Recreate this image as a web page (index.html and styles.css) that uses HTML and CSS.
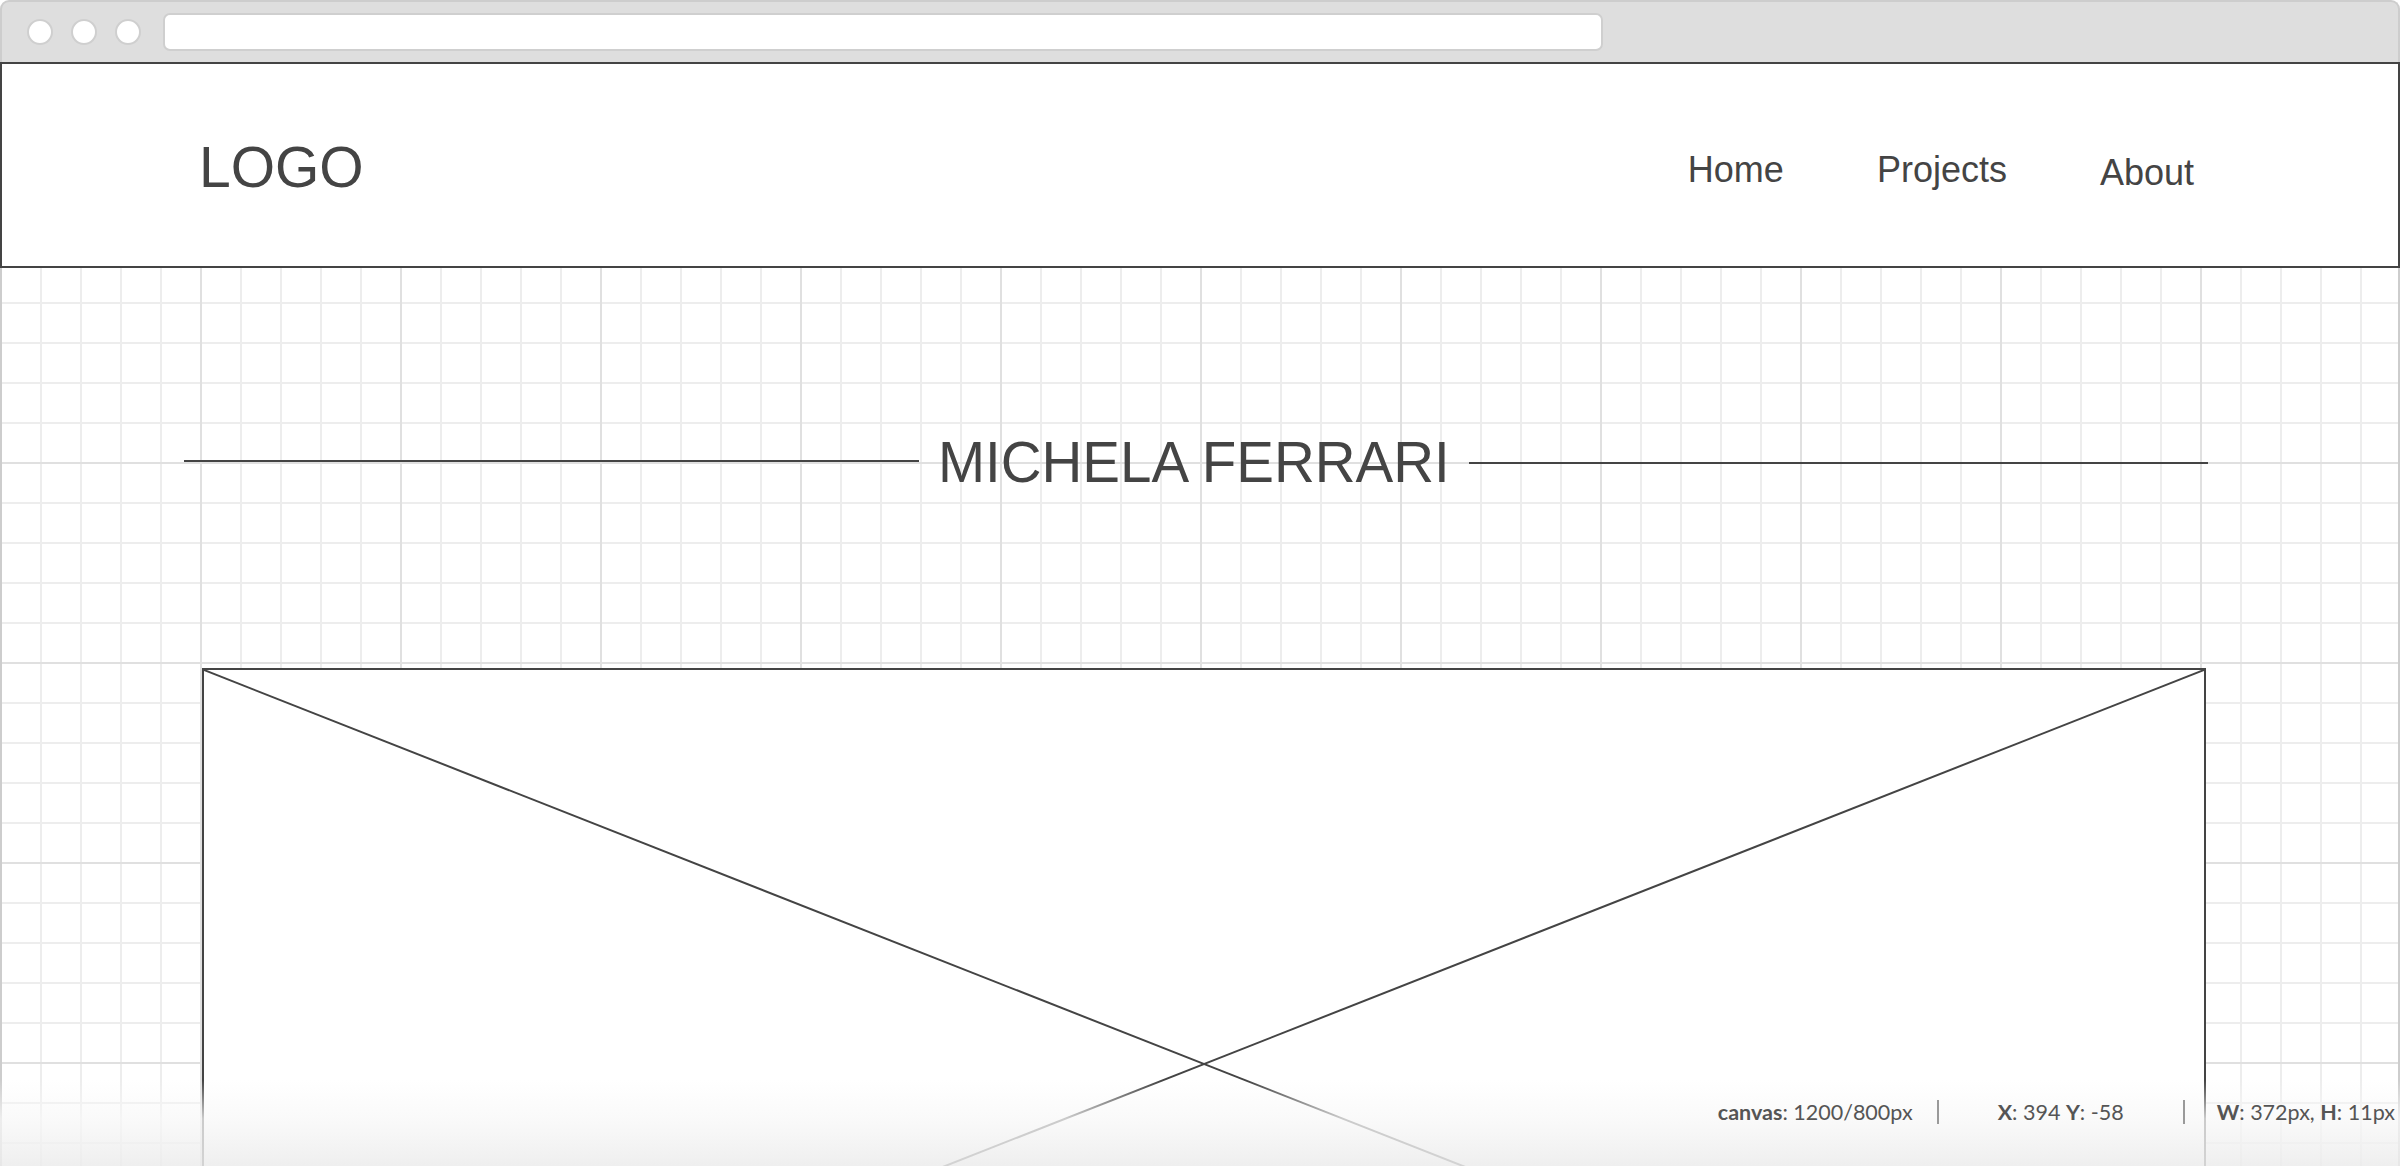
FILE: index.html
```html
<!DOCTYPE html>
<html lang="en">
<head>
<meta charset="utf-8">
<title>Michela Ferrari – wireframe</title>
<link rel="stylesheet" href="styles.css">
</head>
<body>
<div class="window">
  <div class="chrome">
    <span class="dot"></span>
    <span class="dot"></span>
    <span class="dot"></span>
    <div class="address"></div>
  </div>
  <div class="page">
    <header class="topbar">
      <div class="logo">LOGO</div>
      <nav class="nav">
        <a class="nav-item">Home</a>
        <a class="nav-item">Projects</a>
        <a class="nav-item nav-item--low">About</a>
      </nav>
    </header>

    <div class="title-row">
      <span class="rule rule--left"></span>
      <h1 class="title">MICHELA FERRARI</h1>
      <span class="rule rule--right"></span>
    </div>

    <div class="placeholder">
      <svg class="placeholder-x" viewBox="0 0 2000 788" preserveAspectRatio="none">
        <line x1="0" y1="0" x2="2000" y2="788"></line>
        <line x1="2000" y1="0" x2="0" y2="788"></line>
      </svg>
    </div>

    <div class="status">
      <span class="stat stat--canvas"><b>canvas</b>: 1200/800px</span>
      <span class="sep"></span>
      <span class="stat stat--pos"><b>X</b>: 394 <b>Y</b>: -58</span>
      <span class="sep"></span>
      <span class="stat stat--size"><b>W</b>: 372px, <b>H</b>: 11px</span>
    </div>
  </div>
</div>
</body>
</html>
```

FILE: styles.css
```css
* {
  box-sizing: border-box;
}

html, body {
  margin: 0;
  padding: 0;
  width: 2400px;
  height: 1166px;
  overflow: hidden;
  background: #ffffff;
}

.window {
  width: 2400px;
  height: 1166px;
  display: flex;
  flex-direction: column;
}

/* ---------- browser chrome ---------- */
.chrome {
  height: 62px;
  flex: none;
  background: #dedede;
  border: 2px solid #cdcdcd;
  border-bottom: 0;
  border-radius: 9px 9px 0 0;
  display: flex;
  align-items: center;
  padding-left: 25px;
  gap: 18px;
}

.dot {
  width: 26px;
  height: 26px;
  border-radius: 50%;
  background: #ffffff;
  border: 2px solid #cfcfcf;
  flex: none;
}

.address {
  margin-left: 4px;
  width: 1440px;
  height: 38px;
  background: #ffffff;
  border: 2px solid #cfcfcf;
  border-radius: 7px;
}

/* ---------- canvas page ---------- */
.page {
  position: relative;
  flex: 1;
  overflow: hidden;
  background-color: #ffffff;
  background-image:
    linear-gradient(to right, #e0e0e0 2px, transparent 2px),
    linear-gradient(to bottom, #e0e0e0 2px, transparent 2px),
    linear-gradient(to right, #ededed 2px, transparent 2px),
    linear-gradient(to bottom, #ededed 2px, transparent 2px);
  background-size: 200px 200px, 200px 200px, 40px 40px, 40px 40px;
  box-shadow: inset 2px 0 0 #cdcdcd, inset -2px 0 0 #cdcdcd;
  font-family: "Liberation Sans", Arial, sans-serif;
  color: #444444;
}

.topbar {
  height: 206px;
  background: #ffffff;
  border: 2px solid #444444;
  display: flex;
  align-items: flex-start;
  justify-content: space-between;
  padding: 0 204px 0 197px;
}

.logo {
  margin-top: 75px;
  font-size: 57px;
  line-height: 1;
  color: #444444;
}

.nav {
  margin-top: 88px;
  display: flex;
  align-items: flex-start;
  gap: 93px;
}

.nav-item {
  font-size: 36px;
  line-height: 1;
  color: #444444;
  text-decoration: none;
}

.nav-item--low {
  margin-top: 3px;
}

/* ---------- title ---------- */
.title-row {
  margin: 167px 0 0 184px;
  width: 2024px;
  height: 56px;
  display: flex;
  align-items: center;
  gap: 19px;
}

.rule {
  height: 2px;
  background: #444444;
}

.rule--left {
  flex: none;
  width: 735px;
  margin-bottom: 4px;
}

.rule--right {
  flex: 1;
}

.title {
  margin: 0;
  font-size: 56.5px;
  font-weight: normal;
  line-height: 1;
  white-space: nowrap;
  color: #444444;
}

/* ---------- image placeholder ---------- */
.placeholder {
  margin: 177px 0 0 202px;
  width: 2004px;
  height: 792px;
  background: #ffffff;
  border: 2px solid #444444;
}

.placeholder-x {
  display: block;
  width: 100%;
  height: 100%;
}

.placeholder-x line {
  stroke: #444444;
  stroke-width: 2;
  vector-effect: non-scaling-stroke;
}

/* ---------- status overlay ---------- */
.status {
  position: absolute;
  left: 0;
  right: 0;
  bottom: 0;
  height: 86px;
  padding: 20px 5px 0 0;
  display: flex;
  align-items: flex-start;
  justify-content: flex-end;
  background: linear-gradient(to bottom, rgba(250, 250, 250, 0) 0%, rgba(248, 248, 248, 0.75) 45%, rgba(236, 236, 236, 0.85) 100%);
  font-family: Lato, "Open Sans", sans-serif;
  font-size: 21.5px;
  color: #555555;
}

.stat {
  height: 24px;
  line-height: 24px;
  white-space: nowrap;
}

.stat b {
  font-weight: 700;
}

.stat--canvas {
  margin-right: 24px;
}

.stat--pos {
  width: 244px;
  text-align: center;
}

.stat--size {
  margin-left: 32px;
}

.sep {
  width: 2px;
  height: 24px;
  background: #9a9a9a;
  flex: none;
}
```
